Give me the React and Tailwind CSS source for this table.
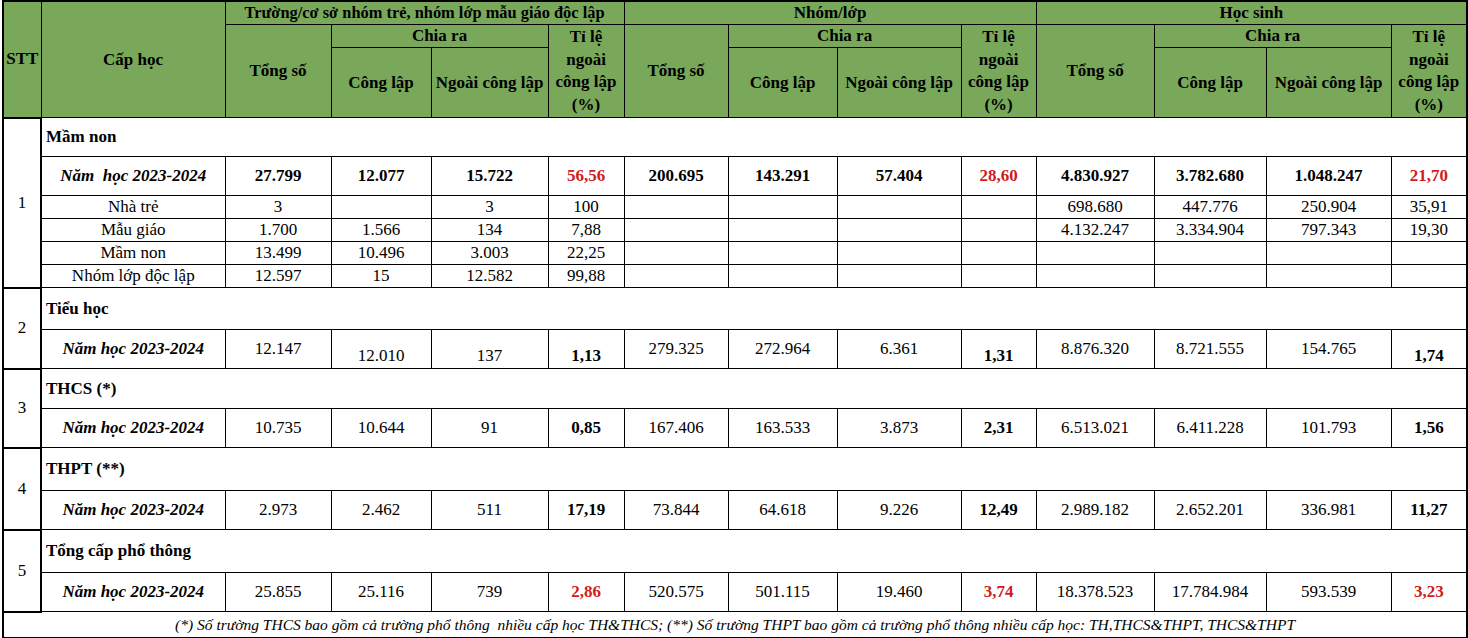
import { Fragment } from 'react'

const GREEN = 'bg-[#79a85b]'

const groups = [
  {
    stt: 1,
    name: 'Mầm non',
    h: 'h-[39px]',
    yearLabel: 'Năm\u00a0 học 2023-2024',
    yearBold: true,
    year: [
      ['27.799'], ['12.077'], ['15.722'], ['56,56', 'red'],
      ['200.695'], ['143.291'], ['57.404'], ['28,60', 'red'],
      ['4.830.927'], ['3.782.680'], ['1.048.247'], ['21,70', 'red'],
    ],
    subs: [
      { label: 'Nhà trẻ', values: ['3', '', '3', '100', '', '', '', '', '698.680', '447.776', '250.904', '35,91'] },
      { label: 'Mẫu giáo', values: ['1.700', '1.566', '134', '7,88', '', '', '', '', '4.132.247', '3.334.904', '797.343', '19,30'] },
      { label: 'Mầm non', values: ['13.499', '10.496', '3.003', '22,25', '', '', '', '', '', '', '', ''] },
      { label: 'Nhóm lớp độc lập', values: ['12.597', '15', '12.582', '99,88', '', '', '', '', '', '', '', ''] },
    ],
  },
  {
    stt: 2,
    name: 'Tiểu học',
    h: 'h-[42px]',
    year: [
      ['12.147'], ['12.010', 'low'], ['137', 'low'], ['1,13', 'bold low'],
      ['279.325'], ['272.964'], ['6.361'], ['1,31', 'bold low'],
      ['8.876.320'], ['8.721.555'], ['154.765'], ['1,74', 'bold low'],
    ],
  },
  {
    stt: 3,
    name: 'THCS (*)',
    h: 'h-[40px]',
    year: [
      ['10.735'], ['10.644'], ['91'], ['0,85', 'bold'],
      ['167.406'], ['163.533'], ['3.873'], ['2,31', 'bold'],
      ['6.513.021'], ['6.411.228'], ['101.793'], ['1,56', 'bold'],
    ],
  },
  {
    stt: 4,
    name: 'THPT (**)',
    h: 'h-[43px]',
    year: [
      ['2.973'], ['2.462'], ['511'], ['17,19', 'bold'],
      ['73.844'], ['64.618'], ['9.226'], ['12,49', 'bold'],
      ['2.989.182'], ['2.652.201'], ['336.981'], ['11,27', 'bold'],
    ],
  },
  {
    stt: 5,
    name: 'Tổng cấp phổ thông',
    h: 'h-[43px]',
    year: [
      ['25.855'], ['25.116'], ['739'], ['2,86', 'red'],
      ['520.575'], ['501.115'], ['19.460'], ['3,74', 'red'],
      ['18.378.523'], ['17.784.984'], ['593.539'], ['3,23', 'red'],
    ],
  },
]

const widths = [38, 184, 106, 100, 117, 76, 104, 109, 124, 75, 118, 112, 125, 76]

function ValueCell({ value, flags = '', allBold }) {
  const red = flags.includes('red')
  const bold = allBold || red || flags.includes('bold')
  const low = flags.includes('low')
  return (
    <td
      className={`border border-black text-center px-1 ${low ? 'align-bottom pb-[1px]' : 'align-middle'} ${bold ? 'font-bold' : ''} ${red ? 'text-[#d01c1c]' : ''}`}
    >
      {value}
    </td>
  )
}

function HeaderBlock({ title, small }) {
  return (
    <th colSpan={4} className={`border border-black font-bold align-middle ${small ? 'text-[16.4px]' : ''}`}>
      {title}
    </th>
  )
}

export default function App() {
  return (
    <div className="w-[1468px] h-[638px] bg-white pl-[2px] font-['Liberation_Serif',serif] text-[17px] leading-[22px] text-black">
      <table className="w-[1464px] table-fixed border-collapse border-2 border-black">
        <colgroup>
          {widths.map((w, i) => (
            <col key={i} style={{ width: w }} />
          ))}
        </colgroup>
        <thead className={GREEN}>
          <tr className="h-[23px]">
            <th rowSpan={3} className="border border-black font-bold">STT</th>
            <th rowSpan={3} className="border border-black font-bold">Cấp học</th>
            <HeaderBlock title="Trường/cơ sở nhóm trẻ, nhóm lớp mẫu giáo độc lập" small />
            <HeaderBlock title="Nhóm/lớp" />
            <HeaderBlock title="Học sinh" />
          </tr>
          <tr className="h-[22px]">
            {[0, 1, 2].map((i) => (
              <Fragment key={i}>
                <th rowSpan={2} className="border border-black font-bold">Tổng số</th>
                <th colSpan={2} className="border border-black font-bold">Chia ra</th>
                <th rowSpan={2} className="border border-black font-bold leading-[22.5px]">
                  Tỉ lệ<br />ngoài<br />công lập<br />(%)
                </th>
              </Fragment>
            ))}
          </tr>
          <tr className="h-[70px]">
            {[0, 1, 2].map((i) => (
              <Fragment key={i}>
                <th className="border border-black font-bold">Công lập</th>
                <th className="border border-black font-bold whitespace-nowrap">Ngoài công lập</th>
              </Fragment>
            ))}
          </tr>
        </thead>
        <tbody>
          {groups.map((g) => (
            <Fragment key={g.stt}>
              <tr className={g.h}>
                <td
                  rowSpan={2 + (g.subs ? g.subs.length : 0)}
                  className="border-2 border-black text-center align-middle"
                >
                  {g.stt}
                </td>
                <td colSpan={13} className="border border-black font-bold px-[4px] align-middle">
                  {g.name}
                </td>
              </tr>
              <tr className="h-[39px]">
                <td className="border border-black text-center font-bold italic align-middle whitespace-nowrap">
                  {g.yearLabel || 'Năm học 2023-2024'}
                </td>
                {g.year.map(([v, f], i) => (
                  <ValueCell key={i} value={v} flags={f} allBold={g.yearBold} />
                ))}
              </tr>
              {g.subs &&
                g.subs.map((s) => (
                  <tr key={s.label} className="h-[23px] leading-[20px]">
                    <td className="border border-black text-center">{s.label}</td>
                    {s.values.map((v, i) => (
                      <ValueCell key={i} value={v} />
                    ))}
                  </tr>
                ))}
            </Fragment>
          ))}
          <tr className="h-[26px]">
            <td colSpan={14} className="border border-black text-center italic text-[15.5px]">
              (*) Số trường THCS bao gồm cả trường phổ thông&nbsp; nhiều cấp học TH&amp;THCS; (**) Số trường THPT bao gồm cả trường phổ thông nhiều cấp học: TH,THCS&amp;THPT, THCS&amp;THPT
            </td>
          </tr>
        </tbody>
      </table>
    </div>
  )
}
